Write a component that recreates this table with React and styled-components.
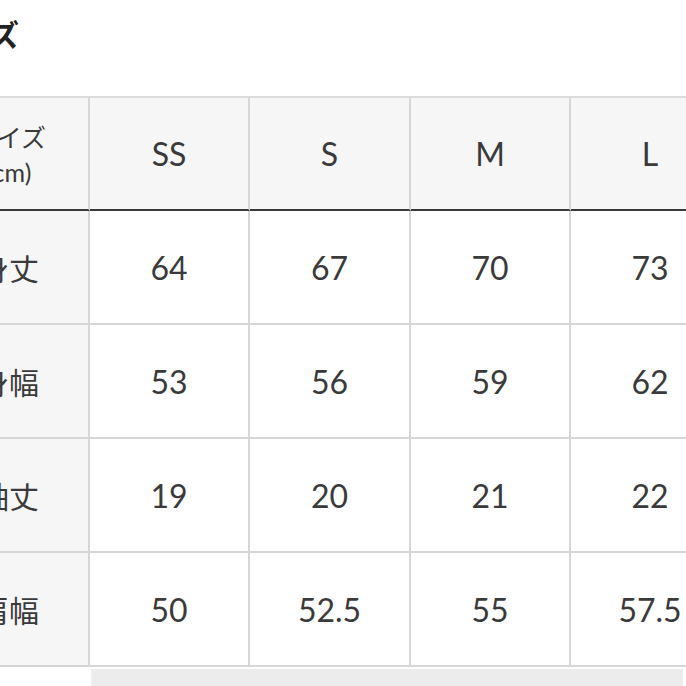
import styled, { createGlobalStyle } from "styled-components";

const GlobalStyle = createGlobalStyle`
  html, body {
    margin: 0;
    padding: 0;
    background: #fff;
    overflow: hidden;
  }
  body {
    font-family: "Lato", "Noto Sans CJK JP", sans-serif;
    color: #333;
  }
`;

const Page = styled.div`
  width: 820px;
  margin-left: -70px;
`;

const Title = styled.h2`
  margin: 0;
  padding-top: 15px;
  height: 96px;
  box-sizing: border-box;
  font-family: "Noto Sans CJK JP", sans-serif;
  font-size: 30px;
  font-weight: 700;
  line-height: 36px;
  color: #222;
`;

const Table = styled.div`
  display: grid;
  grid-template-columns: 160px 160px 161px 160px 160px;
  grid-template-rows: 113px repeat(4, 114px);
  border-top: 2px solid #dcdcdc;
`;

const Cell = styled.div`
  display: flex;
  flex-direction: column;
  align-items: center;
  justify-content: center;
  box-sizing: border-box;
  border-right: 2px solid #d6d6d6;
  border-bottom: 2px solid ${(p) => (p.$head ? "#3a3a3a" : "#d6d6d6")};
  background: ${(p) => (p.$head || p.$label ? "#f6f6f6" : "#fff")};
  font-family: ${(p) =>
    p.$label ? '"Noto Sans CJK JP", sans-serif' : '"Lato", "Noto Sans CJK JP", sans-serif'};
  font-size: ${(p) => (p.$label ? "30px" : "32px")};
  color: #3a3a3a;
  text-align: center;
`;

const Corner = styled.span`
  display: block;
  font-family: "Noto Sans CJK JP", sans-serif;
  font-size: 25px;
  line-height: 36px;
`;

const Unit = styled.span`
  display: block;
  font-family: "Lato", sans-serif;
  font-size: 25px;
  line-height: 36px;
`;

const ScrollRow = styled.div`
  display: flex;
  margin-top: 2px;
`;

const Thumb = styled.div`
  margin-left: 161px;
  width: 592px;
  height: 20px;
  background: #ececec;
`;

const sizes = ["SS", "S", "M", "L"];

const rows = [
  { label: "身丈", values: ["64", "67", "70", "73"] },
  { label: "身幅", values: ["53", "56", "59", "62"] },
  { label: "袖丈", values: ["19", "20", "21", "22"] },
  { label: "肩幅", values: ["50", "52.5", "55", "57.5"] },
];

const App = () => {
  return (
    <>
      <GlobalStyle />
      <Page>
        <Title>サイズ</Title>
        <Table>
          <Cell $head>
            <Corner>サイズ</Corner>
            <Unit>(cm)</Unit>
          </Cell>
          {sizes.map((s) => (
            <Cell $head key={s}>
              {s}
            </Cell>
          ))}
          {rows.map((row) => [
            <Cell $label key={row.label}>
              {row.label}
            </Cell>,
            ...row.values.map((v, i) => <Cell key={row.label + i}>{v}</Cell>),
          ])}
        </Table>
        <ScrollRow>
          <Thumb />
        </ScrollRow>
      </Page>
    </>
  );
};

export default App;
